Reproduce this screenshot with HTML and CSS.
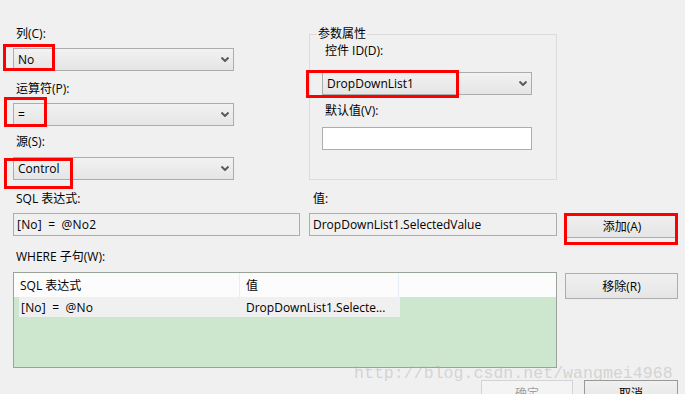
FILE: index.html
```html
<!DOCTYPE html>
<html>

<head>
    <title>配置 Where 表达式</title>
    <link rel="stylesheet" href="styles.css">
</head>

<body>
    <div class="dialog">
        <div class="top">
            <div class="left-col">
                <div class="field-label">列(C):</div>
                <div class="combo combo-first">
                    <span>No</span>
                    <svg class="arrow" width="8" height="5" viewBox="0 0 8 5"><path d="M0.5 0.5 L4 4 L7.5 0.5" /></svg>
                    <div class="mark mark-col"></div>
                </div>
                <div class="field-label label-op">运算符(P):</div>
                <div class="combo combo-first">
                    <span>=</span>
                    <svg class="arrow" width="8" height="5" viewBox="0 0 8 5"><path d="M0.5 0.5 L4 4 L7.5 0.5" /></svg>
                    <div class="mark mark-op"></div>
                </div>
                <div class="field-label label-src">源(S):</div>
                <div class="combo combo-src">
                    <span>Control</span>
                    <svg class="arrow" width="8" height="5" viewBox="0 0 8 5"><path d="M0.5 0.5 L4 4 L7.5 0.5" /></svg>
                    <div class="mark mark-src"></div>
                </div>
            </div>

            <fieldset class="group">
                <legend>参数属性</legend>
                <div class="field-label label-ctl">控件 ID(D):</div>
                <div class="combo combo-ctl">
                    <span>DropDownList1</span>
                    <svg class="arrow" width="8" height="5" viewBox="0 0 8 5"><path d="M0.5 0.5 L4 4 L7.5 0.5" /></svg>
                    <div class="mark mark-ctl"></div>
                </div>
                <div class="field-label label-def">默认值(V):</div>
                <div class="textbox textbox-white"></div>
            </fieldset>
        </div>

        <div class="expr-row">
            <div class="expr-col">
                <div class="field-label">SQL 表达式:</div>
                <div class="textbox expr">[No] = @No2</div>
            </div>
            <div class="value-col">
                <div class="field-label">值:</div>
                <div class="textbox">DropDownList1.SelectedValue</div>
            </div>
            <div class="button-col">
                <div class="button button-add">
                    添加(A)
                    <div class="mark mark-add"></div>
                </div>
            </div>
        </div>

        <div class="field-label label-where">WHERE 子句(W):</div>
        <div class="where-row">
            <div class="list">
                <div class="list-head">
                    <div class="cell cell-expr">SQL 表达式</div>
                    <div class="cell cell-value">值</div>
                </div>
                <div class="list-item">
                    <div class="cell cell-expr expr">[No] = @No</div>
                    <div class="cell cell-value">DropDownList1.Selecte...</div>
                </div>
            </div>
            <div class="button button-remove">移除(R)</div>
        </div>

        <div class="footer">
            <div class="button button-ok">确定</div>
            <div class="button button-cancel">取消</div>
        </div>

        <div class="watermark">http://blog.csdn.net/wangmei4968</div>
    </div>
</body>

</html>
```
FILE: styles.css
```css
body {
    margin: 0;
    background: #f0f0f0;
    font-family: "Open Sans", "Noto Sans CJK SC", sans-serif;
    font-size: 12px;
    color: #000;
}

.dialog {
    position: relative;
    width: 685px;
    height: 394px;
    padding: 0 7px 0 13px;
    box-sizing: border-box;
    overflow: hidden;
}

.top {
    display: flex;
    align-items: flex-start;
}

.left-col {
    width: 221px;
    padding-top: 26px;
}

.field-label {
    height: 16px;
    line-height: 16px;
    padding-left: 3px;
    white-space: nowrap;
}

.label-op {
    margin-top: 10px;
}

.label-src {
    margin-top: 8px;
}

.combo {
    position: relative;
    display: flex;
    align-items: center;
    height: 23px;
    padding-left: 4px;
    border: 1px solid #acacac;
    box-sizing: border-box;
    background: linear-gradient(#f2f2f2, #e5e5e5);
}

.combo-first {
    margin-top: 6px;
}

.combo-src {
    margin-top: 7px;
}

.combo span {
    flex-grow: 1;
}

.arrow {
    margin-right: 4px;
}

.arrow path {
    fill: none;
    stroke: #5a5a5a;
    stroke-width: 2;
}

/* red annotation boxes drawn over the screenshot */
.mark {
    position: absolute;
    border: 3px solid #ff0000;
    box-sizing: border-box;
}

.mark-col {
    left: -11px;
    top: -5px;
    width: 52px;
    height: 27px;
}

.mark-op {
    left: -10px;
    top: -7px;
    width: 43px;
    height: 30px;
}

.mark-src {
    left: -10px;
    top: 0;
    width: 69px;
    height: 31px;
}

.mark-ctl {
    left: -17px;
    top: -3px;
    width: 153px;
    height: 28px;
}

.mark-add {
    left: -3px;
    top: -1px;
    width: 114px;
    height: 32px;
}

.group {
    margin: 27px 0 0 75px;
    padding: 0 0 0 12px;
    width: 248px;
    height: 153px;
    border: 1px solid #dcdcdc;
    box-sizing: border-box;
}

.group legend {
    margin-left: -5px;
    padding: 0 1px;
    line-height: 14px;
}

.label-ctl {
    margin-top: 2px;
}

.combo-ctl {
    margin-top: 13px;
    width: 210px;
}

.label-def {
    margin-top: 8px;
}

.textbox {
    height: 23px;
    line-height: 21px;
    margin-top: 6px;
    padding-left: 3px;
    border: 1px solid #adadad;
    box-sizing: border-box;
    white-space: nowrap;
}

.expr {
    word-spacing: 3px;
    letter-spacing: 0.2px;
}

.textbox-white {
    width: 210px;
    margin-top: 8px;
    background: #fff;
}

.expr-row {
    display: flex;
    margin-top: 11px;
}

.expr-col {
    width: 287px;
}

.value-col {
    width: 248px;
    margin-left: 9px;
}

.value-col .field-label {
    padding-left: 4px;
}

.button-col {
    margin-left: 9px;
    padding-top: 22px;
}

.button {
    position: relative;
    display: flex;
    align-items: center;
    justify-content: center;
    border: 1px solid #adadad;
    box-sizing: border-box;
    background: linear-gradient(#f0f0f0, #e5e5e5);
    white-space: nowrap;
}

.button-add {
    width: 112px;
    height: 25px;
}

.label-where {
    margin-top: 11px;
}

.where-row {
    display: flex;
    align-items: flex-start;
    margin-top: 7px;
}

.list {
    width: 544px;
    height: 96px;
    border: 1px solid #9aa39a;
    box-sizing: border-box;
    background: #cde7ce;
}

.list-head {
    display: flex;
    height: 24px;
    background: #fcfcfc;
}

.list-head .cell-expr {
    border-right: 1px solid #e5eef8;
}

.list-head .cell-value {
    width: 159px;
    border-right: 1px solid #e5eef8;
}

.cell {
    display: flex;
    align-items: center;
    padding-left: 6px;
    box-sizing: border-box;
    white-space: nowrap;
}

.cell-expr {
    width: 226px;
}

.list-item {
    display: flex;
    width: 381px;
    height: 20px;
    margin-left: 5px;
    background: #f0f0f0;
}

.list-item .cell-expr {
    width: 221px;
    padding-left: 2px;
}

.button-remove {
    width: 113px;
    height: 26px;
    margin: 1px 0 0 8px;
}

.footer {
    display: flex;
    justify-content: flex-end;
    gap: 11px;
    margin-top: 12px;
}

.button-ok {
    width: 92px;
    height: 25px;
    border-color: #d4d4d4;
    background: #f4f4f4;
    color: #a0a0a0;
}

.button-cancel {
    width: 94px;
    height: 25px;
    border-color: #999;
}

.watermark {
    position: absolute;
    left: 354px;
    top: 364px;
    font-family: "Liberation Mono", monospace;
    font-size: 16.6px;
    line-height: 20px;
    color: rgba(175, 175, 175, 0.45);
    white-space: nowrap;
}
```
